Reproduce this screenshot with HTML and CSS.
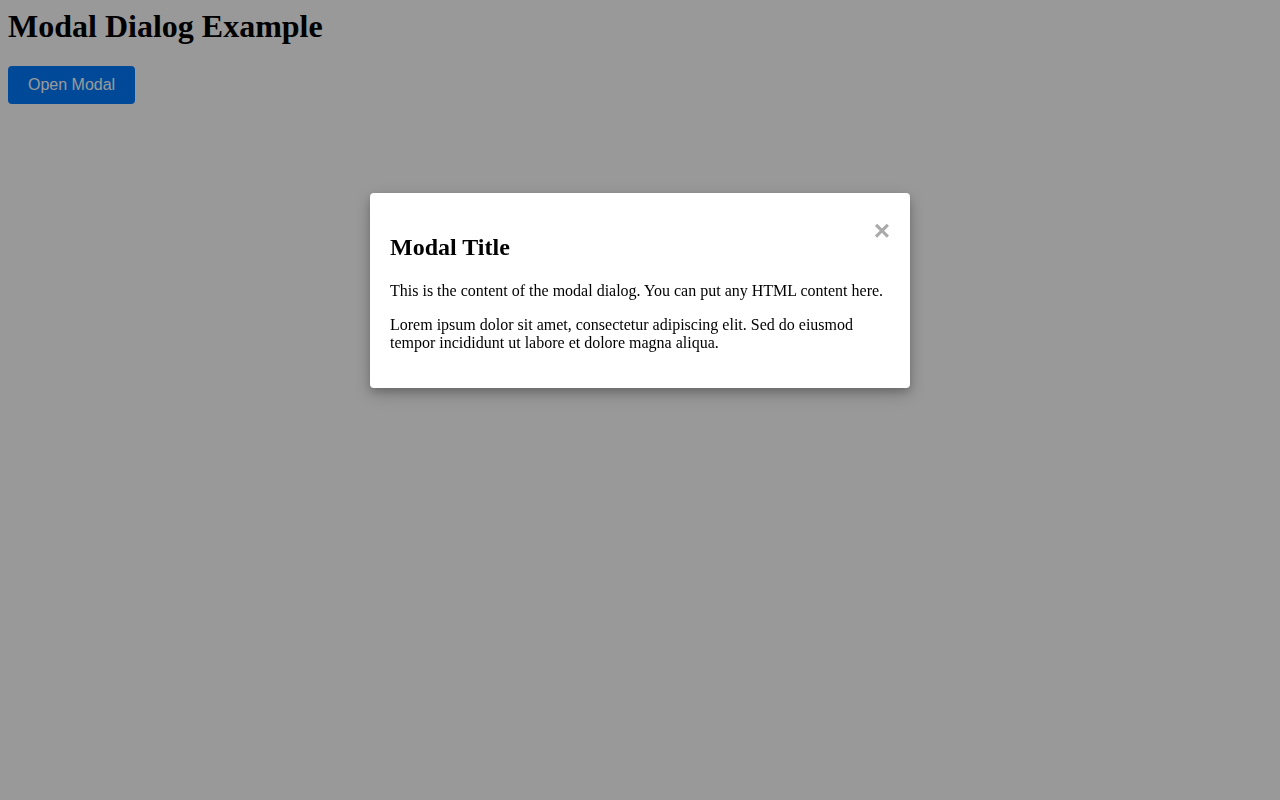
FILE: index.html
```html
<!DOCTYPE html>
<html>
<head>
<meta charset="utf-8">
<title>Modal Dialog Example</title>
<link rel="stylesheet" href="styles.css">
</head>
<body>
<h1 class="page-title">Modal Dialog Example</h1>
<button class="open-btn">Open Modal</button>
<div class="modal">
  <div class="modal-content">
    <span class="close">&times;</span>
    <h2 class="modal-title">Modal Title</h2>
    <p>This is the content of the modal dialog. You can put any HTML content here.</p>
    <p>Lorem ipsum dolor sit amet, consectetur adipiscing elit. Sed do eiusmod tempor incididunt ut labore et dolore magna aliqua.</p>
  </div>
</div>
</body>
</html>
```
FILE: styles.css
```css
html, body {
  font-family: "Liberation Serif", "Times New Roman", serif;
}
body {
  margin: 8px;
  color: #000;
  background: #fff;
}
.page-title {
  font-size: 32px;
  font-weight: bold;
  margin: 0 0 21px;
}
.open-btn {
  font-family: "Liberation Sans", Arial, sans-serif;
  font-size: 16px;
  color: #fff;
  background: #007bff;
  border: none;
  border-radius: 4px;
  padding: 10px 20px;
  line-height: 18px;
  cursor: pointer;
}
.modal {
  position: fixed;
  left: 0;
  top: 0;
  width: 100%;
  height: 100%;
  background: rgba(0, 0, 0, 0.4);
  overflow: auto;
}
.modal-content {
  box-sizing: border-box;
  width: 540px;
  margin: 193px auto 0;
  padding: 20px;
  background: #fff;
  border-radius: 4px;
  box-shadow: 0 4px 8px rgba(0, 0, 0, 0.2), 0 6px 20px rgba(0, 0, 0, 0.19);
}
.close {
  float: right;
  color: #aaa;
  font-family: "Liberation Sans", Arial, sans-serif;
  font-size: 28px;
  font-weight: bold;
  line-height: 36px;
  cursor: pointer;
}
.modal-title {
  font-size: 24px;
  margin: 21px 0;
}
.modal-content p {
  font-size: 16px;
  margin: 16px 0;
}
.modal-content p:last-child {
  margin-top: 15px;
}
```
